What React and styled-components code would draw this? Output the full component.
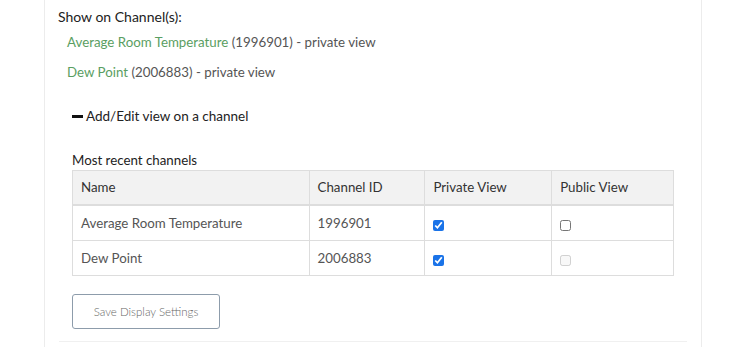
import React from 'react';
import styled, { createGlobalStyle } from 'styled-components';

const GlobalStyle = createGlobalStyle`
  body {
    margin: 0;
    background: #fff;
    font-family: Lato, 'Liberation Sans', sans-serif;
  }
`;

const Panel = styled.div`
  width: 658px;
  margin-left: 44px;
  height: 347px;
  box-sizing: border-box;
  border-left: 1px solid #ececec;
  border-right: 1px solid #ececec;
  padding: 7px 14px 0 13px;
`;

const Heading = styled.div`
  font-size: 14px;
  color: #222;
  line-height: 20px;
`;

const ChannelLine = styled.div`
  font-size: 13.3px;
  color: #555;
  line-height: 20px;
  padding-left: 9px;
  margin-top: ${(p) => p.$top}px;
`;

const GreenName = styled.span`
  color: #5a9e62;
`;

const Section = styled.div`
  padding-left: 14px;
`;

const Toggle = styled.div`
  display: flex;
  align-items: center;
  gap: 3px;
  margin-top: 24px;
  font-size: 13.5px;
  color: #222;
  line-height: 20px;
`;

const Dash = styled.span`
  display: inline-block;
  width: 11px;
  height: 3px;
  background: #111;
`;

const Caption = styled.div`
  margin-top: 24px;
  font-size: 13.3px;
  color: #222;
  line-height: 20px;
`;

const Table = styled.table`
  width: 602px;
  border-collapse: collapse;
  border: 1px solid #ddd;
  font-size: 13.3px;
  color: #555;
`;

const HeadCell = styled.th`
  text-align: left;
  font-weight: normal;
  color: #333;
  background: #f2f2f2;
  border: 1px solid #ddd;
  border-bottom: 2px solid #ddd;
  height: 34px;
  padding: 0 8px;
  width: ${(p) => p.$w}px;
  box-sizing: border-box;
`;

const Cell = styled.td`
  border: 1px solid #ddd;
  height: 34px;
  padding: 0 8px;
`;

const Check = styled.input`
  margin: 8px 0 0 0;
  width: 11px;
  height: 11px;
  accent-color: #1a73e8;
`;

const SaveButton = styled.button`
  margin-top: 18px;
  width: 148px;
  height: 35px;
  background: #fff;
  border: 1px solid #8d9cab;
  border-radius: 3px;
  font-family: Lato, 'Liberation Sans', sans-serif;
  font-size: 11.5px;
  font-weight: 300;
  color: #666;
`;

const Rule = styled.div`
  margin-top: 12px;
  margin-left: 1px;
  width: 628px;
  height: 1px;
  background: #f0f0f0;
`;

const rows = [
  { name: 'Average Room Temperature', id: '1996901', priv: true, pub: false, pubDisabled: false },
  { name: 'Dew Point', id: '2006883', priv: true, pub: false, pubDisabled: true },
];

const App = () => {
  return (
    <>
      <GlobalStyle />
      <Panel>
        <Heading>Show on Channel(s):</Heading>
        <ChannelLine $top={5}>
          <GreenName>Average Room Temperature</GreenName> (1996901) - private view
        </ChannelLine>
        <ChannelLine $top={10}>
          <GreenName>Dew Point</GreenName> (2006883) - private view
        </ChannelLine>
        <Section>
          <Toggle>
            <Dash />
            Add/Edit view on a channel
          </Toggle>
          <Caption>Most recent channels</Caption>
          <Table>
            <thead>
              <tr>
                <HeadCell $w={237}>Name</HeadCell>
                <HeadCell $w={116}>Channel ID</HeadCell>
                <HeadCell $w={127}>Private View</HeadCell>
                <HeadCell $w={122}>Public View</HeadCell>
              </tr>
            </thead>
            <tbody>
              {rows.map((row) => (
                <tr key={row.id}>
                  <Cell>{row.name}</Cell>
                  <Cell>{row.id}</Cell>
                  <Cell>
                    <Check type="checkbox" defaultChecked={row.priv} />
                  </Cell>
                  <Cell>
                    <Check type="checkbox" defaultChecked={row.pub} disabled={row.pubDisabled} />
                  </Cell>
                </tr>
              ))}
            </tbody>
          </Table>
          <SaveButton>Save Display Settings</SaveButton>
        </Section>
        <Rule />
      </Panel>
    </>
  );
};

export default App;
